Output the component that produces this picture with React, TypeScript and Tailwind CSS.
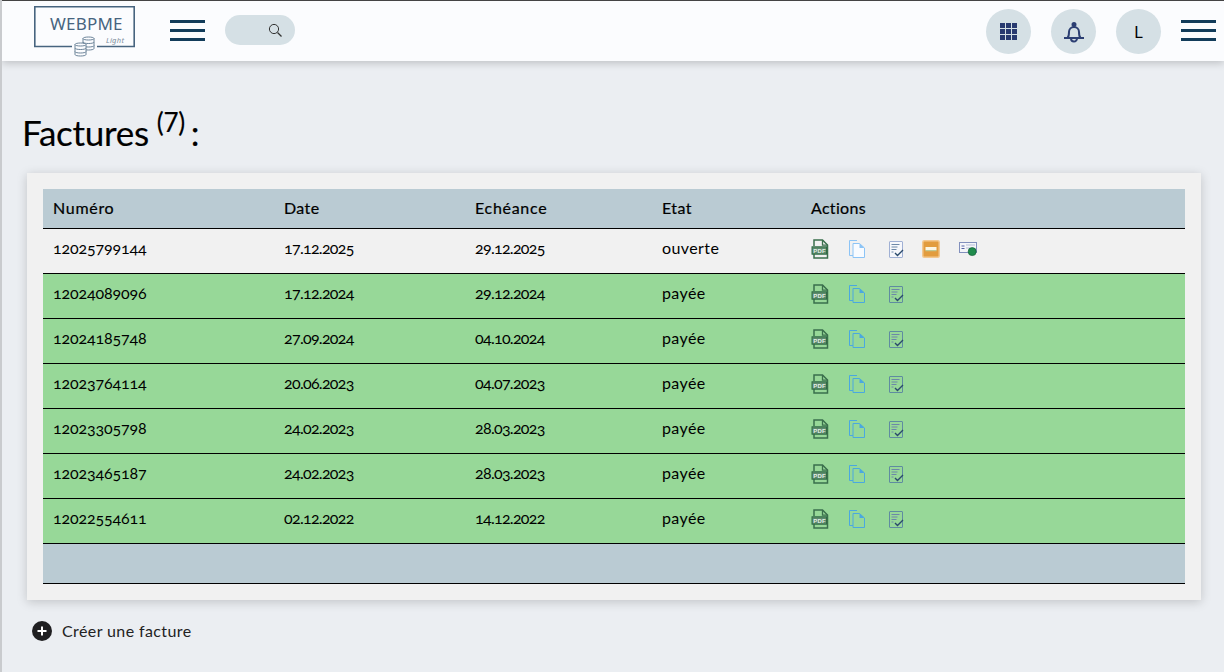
const font = "font-['Lato','Noto_Sans',sans-serif]";

const rows = [
  ["12025799144", "17.12.2025", "29.12.2025", "ouverte"],
  ["12024089096", "17.12.2024", "29.12.2024", "payée"],
  ["12024185748", "27.09.2024", "04.10.2024", "payée"],
  ["12023764114", "20.06.2023", "04.07.2023", "payée"],
  ["12023305798", "24.02.2023", "28.03.2023", "payée"],
  ["12023465187", "24.02.2023", "28.03.2023", "payée"],
  ["12022554611", "02.12.2022", "14.12.2022", "payée"],
];

function Burger({ className }: { className?: string }) {
  return (
    <div className={`flex w-[35px] flex-col gap-[6px] ${className ?? ""}`}>
      <div className="h-[3px] bg-[#123c5a]" />
      <div className="h-[3px] bg-[#123c5a]" />
      <div className="h-[3px] bg-[#123c5a]" />
    </div>
  );
}

function Logo() {
  return (
    <svg width="101" height="51" viewBox="0 0 101 51" fill="none" className="shrink-0 mt-[2px]">
      <path d="M38 40.5H.8V.8H100.2V40.5H63" stroke="#47647f" strokeWidth="1.6" />
      <text x="16" y="24" fontSize="17" fill="#47647f" fontFamily="'Noto Sans',sans-serif" letterSpacing="0.2">WEBPME</text>
      <text x="72" y="37" fontSize="7.5" fill="#7b8c9c" fontStyle="italic" fontFamily="'Noto Sans',sans-serif" letterSpacing="0.3">Light</text>
      <g stroke="#47647f" strokeWidth="0.8" fill="#fbfcfe">
        <path d="M49 32.5c0-2 11-2 11 0v10c0 2-11 2-11 0z" />
        <path d="M49 36c0 2 11 2 11 0M49 39.5c0 2 11 2 11 0M49 32.5c0 2 11 2 11 0" />
        <path d="M41 38.5c0-2 11-2 11 0v10c0 2-11 2-11 0z" />
        <path d="M41 42c0 2 11 2 11 0M41 45.5c0 2 11 2 11 0M41 38.5c0 2 11 2 11 0" />
      </g>
    </svg>
  );
}

function PdfIcon() {
  return (
    <svg width="18" height="20" viewBox="0 0 18 20" fill="none">
      <path d="M3 7V1h8.5l5 5v13H3V15" stroke="#3a6f4c" strokeWidth="1.5" />
      <path d="M11.5 1V6.2H16.5" stroke="#3a6f4c" strokeWidth="1.3" />
      <rect x="1" y="7.8" width="14.5" height="7.4" fill="#5c8a6c" stroke="#2f6b45" />
      <text x="2.2" y="14" fontSize="6" fontWeight="700" fill="#e4efe7" fontFamily="'Liberation Sans',sans-serif" letterSpacing="0.2">PDF</text>
    </svg>
  );
}

function CopyIcon({ paid }: { paid: boolean }) {
  const c = paid ? "#4aa8e0" : "#8cc4f6";
  return (
    <svg width="16" height="18" viewBox="0 0 16 18" fill="none">
      <path d="M4 15.5H.5V.5H8" stroke={c} />
      <path d="M4 3.5h6.5L15.5 8v9.5H4z" stroke={c} fill={paid ? "none" : "#f8fbff"} />
      <path d="M10.5 3.5V8H15.5z" fill={c} />
    </svg>
  );
}

function CheckDocIcon({ paid }: { paid: boolean }) {
  return (
    <svg width="15" height="17" viewBox="0 0 15 17" fill="none">
      <rect x="0.5" y="0.5" width="13" height="16" rx="0.5" stroke={paid ? "#5f8ca0" : "#a0b0d4"} fill={paid ? "none" : "#f6f7fb"} />
      <path d="M2.5 3.5h8M2.5 6h6M2.5 8.5h5M2.5 11h2" stroke="#6d88a8" />
      <path d="M6 12l2.5 2.5L14 9" stroke="#2a4a6c" strokeWidth="1.4" />
    </svg>
  );
}

function PayIcon() {
  return (
    <svg width="18" height="18" viewBox="0 0 18 18" fill="none">
      <rect x="0.75" y="0.75" width="16.5" height="16.5" rx="1.5" fill="#e29c3e" stroke="#f3c890" strokeWidth="1.5" />
      <rect x="3.5" y="7" width="11" height="3.2" fill="#fbf6e4" />
      <rect x="3.5" y="10.2" width="11" height="1" fill="#b9cfa0" />
    </svg>
  );
}

function ChequeIcon() {
  return (
    <svg width="18" height="15" viewBox="0 0 18 15" fill="none">
      <rect x="0.5" y="0.5" width="17" height="10" fill="#f4f5f9" stroke="#8290bd" />
      <path d="M2.5 4h3M2.5 6.5h3" stroke="#5562a4" />
      <path d="M7 3h9M7 6h4" stroke="#b5bdd6" />
      <circle cx="13.2" cy="9.6" r="4" fill="#1f8c4c" stroke="#15603a" strokeWidth="0.7" />
    </svg>
  );
}

export default function App() {
  return (
    <div className={`flex h-[672px] w-[1224px] flex-col overflow-hidden border-l-2 border-[#c9cbce] bg-[#ebeef2] text-black ${font}`}>
      <header className="flex h-[61px] shrink-0 items-center border-t border-[#444] bg-[#fbfcfe] pb-[1px] pl-[32px] pr-[8px] shadow-[0_2px_8px_rgba(0,0,0,0.2)]">
        <Logo />
        <Burger className="ml-[35px] -mt-[1px]" />
        <div className="ml-[20px] -mt-[1px] flex h-[30px] w-[70px] items-center justify-end rounded-full bg-[#d5e0e5] pr-[12px]">
          <svg width="15" height="15" viewBox="0 0 15 15" fill="none">
            <circle cx="6" cy="6" r="4.6" stroke="#333" strokeWidth="1" />
            <path d="M9.5 9.5l4 4" stroke="#333" strokeWidth="1.2" />
          </svg>
        </div>
        <div className="ml-auto flex items-center gap-[20px]">
          <div className="mt-[2px] flex h-[45px] w-[45px] items-center justify-center rounded-full bg-[#d5e0e5]">
            <div className="grid grid-cols-3 gap-[1px]">
              {Array.from({ length: 9 }).map((_, i) => (
                <div key={i} className="h-[5px] w-[5px] bg-[#283a70]" />
              ))}
            </div>
          </div>
          <div className="mt-[2px] flex h-[45px] w-[45px] items-center justify-center rounded-full bg-[#d5e0e5]">
            <svg width="22" height="22" viewBox="0 0 22 22" fill="none" stroke="#2c3f73" strokeWidth="2">
              <path d="M1 17h20M4.5 17c1.5-1.5 1.5-3 1.5-6a5 5 0 0110 0c0 3 0 4.5 1.5 6" />
              <path d="M8 17.5a3 3 0 006 0" />
              <circle cx="11" cy="3.5" r="1.5" fill="#2c3f73" />
            </svg>
          </div>
          <div className="mt-[2px] flex h-[45px] w-[45px] items-center justify-center rounded-full bg-[#d5e0e5] text-[17px] font-['Noto_Sans',sans-serif]">L</div>
          <Burger />
        </div>
      </header>

      <main className="flex flex-col pl-[20px] pr-[23px]">
        <h1 className="mt-[46px] flex h-[50px] items-center text-[35px] leading-none tracking-[-0.3px] [-webkit-text-stroke:0.15px_black]">
          Factures
          <span className="relative top-[-10px] ml-[8px] text-[26px]">(7)</span>
          <span className="ml-[6px]">:</span>
        </h1>
        <section className="ml-[5px] mt-[16px] bg-[#f1f1f1] px-[16px] py-[16px] shadow-[0_2px_10px_rgba(0,0,0,0.18)]">
          <table className="w-full table-fixed border-collapse text-[16px]">
            <thead>
              <tr className="h-[39px] border-b border-black bg-[#bacbd3] text-left">
                <th className="w-[241px] pb-[1px] pl-[10px] font-normal tracking-[0.7px] [-webkit-text-stroke:0.2px_black]">Numéro</th>
                <th className="w-[191px] pb-[1px] font-normal tracking-[0.4px] [-webkit-text-stroke:0.2px_black]">Date</th>
                <th className="w-[187px] pb-[1px] font-normal tracking-[0.7px] [-webkit-text-stroke:0.2px_black]">Echéance</th>
                <th className="w-[149px] pb-[1px] font-normal tracking-[0.4px] [-webkit-text-stroke:0.2px_black]">Etat</th>
                <th className="pb-[1px] font-normal tracking-[0.3px] [-webkit-text-stroke:0.2px_black]">Actions</th>
              </tr>
            </thead>
            <tbody>
              {rows.map((r, i) => {
                const paid = i > 0;
                return (
                  <tr key={r[0]} className={`h-[45px] border-b border-black ${paid ? "bg-[#97d898]" : "bg-[#f1f1f1]"}`}>
                    <td className="pb-[6px] pl-[10px] tracking-[-0.15px] [font-feature-settings:'onum']">{r[0]}</td>
                    <td className="pb-[6px] tracking-[-0.7px] [font-feature-settings:'onum']">{r[1]}</td>
                    <td className="pb-[6px] tracking-[-0.7px] [font-feature-settings:'onum']">{r[2]}</td>
                    <td className="pb-[6px] tracking-[0.4px]">{r[3]}</td>
                    <td className="pb-[3px]">
                      <div className="flex h-[20px] items-center">
                        <div className="w-[38px]"><PdfIcon /></div>
                        <div className="w-[40px]"><CopyIcon paid={paid} /></div>
                        <div className="w-[33px]"><CheckDocIcon paid={paid} /></div>
                        {!paid && <div className="w-[37px]"><PayIcon /></div>}
                        {!paid && <ChequeIcon />}
                      </div>
                    </td>
                  </tr>
                );
              })}
              <tr className="h-[40px] border-b border-black bg-[#bacbd3]">
                <td colSpan={5} />
              </tr>
            </tbody>
          </table>
        </section>
        <div className="ml-[10px] mt-[19px] flex items-center gap-[10px] text-[16px] tracking-[0.4px] text-[#222]">
          <svg width="20" height="20" viewBox="0 0 20 20">
            <circle cx="10" cy="10" r="10" fill="#1f1f21" />
            <path d="M10 5.5v9M5.5 10h9" stroke="#fff" strokeWidth="2" />
          </svg>
          Créer une facture
        </div>
      </main>
    </div>
  );
}
